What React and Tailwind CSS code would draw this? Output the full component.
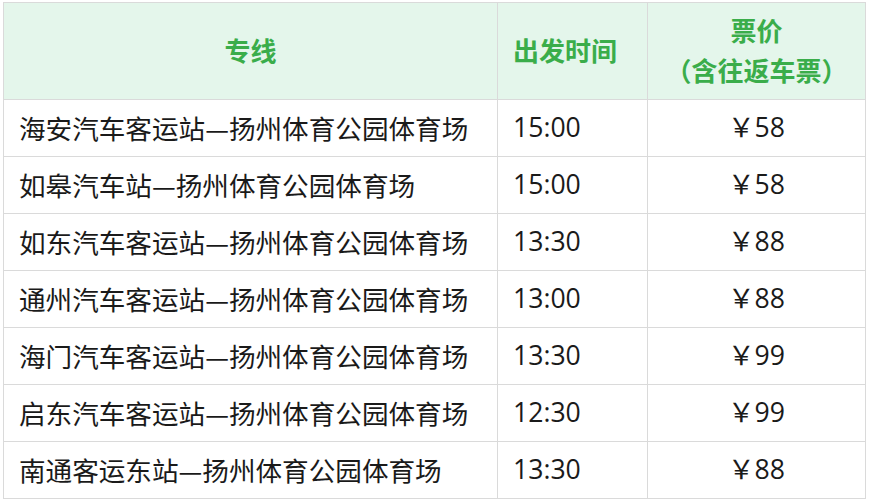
import React from "react";

const rows = [
  ["海安汽车客运站—扬州体育公园体育场", "15:00", "58"],
  ["如皋汽车站—扬州体育公园体育场", "15:00", "58"],
  ["如东汽车客运站—扬州体育公园体育场", "13:30", "88"],
  ["通州汽车客运站—扬州体育公园体育场", "13:00", "88"],
  ["海门汽车客运站—扬州体育公园体育场", "13:30", "99"],
  ["启东汽车客运站—扬州体育公园体育场", "12:30", "99"],
  ["南通客运东站—扬州体育公园体育场", "13:30", "88"],
];

const App = () => {
  return (
    <div
      className="w-[869px] h-[500px] bg-white pt-[2px] pl-[3px]"
      style={{ fontFamily: "'Open Sans', 'Noto Sans CJK SC', sans-serif" }}
    >
      <table className="border-collapse table-fixed w-[862px]">
        <colgroup>
          <col className="w-[494px]" />
          <col className="w-[150px]" />
          <col className="w-[218px]" />
        </colgroup>
        <thead>
          <tr className="h-[97px] bg-[#e4f6eb] text-[#3aad4a] text-[26px] leading-[40px]">
            <th className="border border-[#dadada] text-center font-bold">专线</th>
            <th className="border border-[#dadada] text-left pl-[15px] font-bold">出发时间</th>
            <th className="border border-[#dadada] text-center font-bold">
              <div>票价</div>
              <div>（含往返车票）</div>
            </th>
          </tr>
        </thead>
        <tbody>
          {rows.map(([route, time, price]) => (
            <tr key={route} className="h-[57px] text-[26.6px] text-[#1a1a1a]">
              <td
                className="border border-[#dadada] pl-[15px] whitespace-nowrap"
                style={{ fontFamily: "'Noto Sans CJK SC', sans-serif" }}
              >
                {route}
              </td>
              <td className="border border-[#dadada] pl-[15px]">{time}</td>
              <td className="border border-[#dadada] text-center">￥{price}</td>
            </tr>
          ))}
        </tbody>
      </table>
    </div>
  );
};

export default App;
